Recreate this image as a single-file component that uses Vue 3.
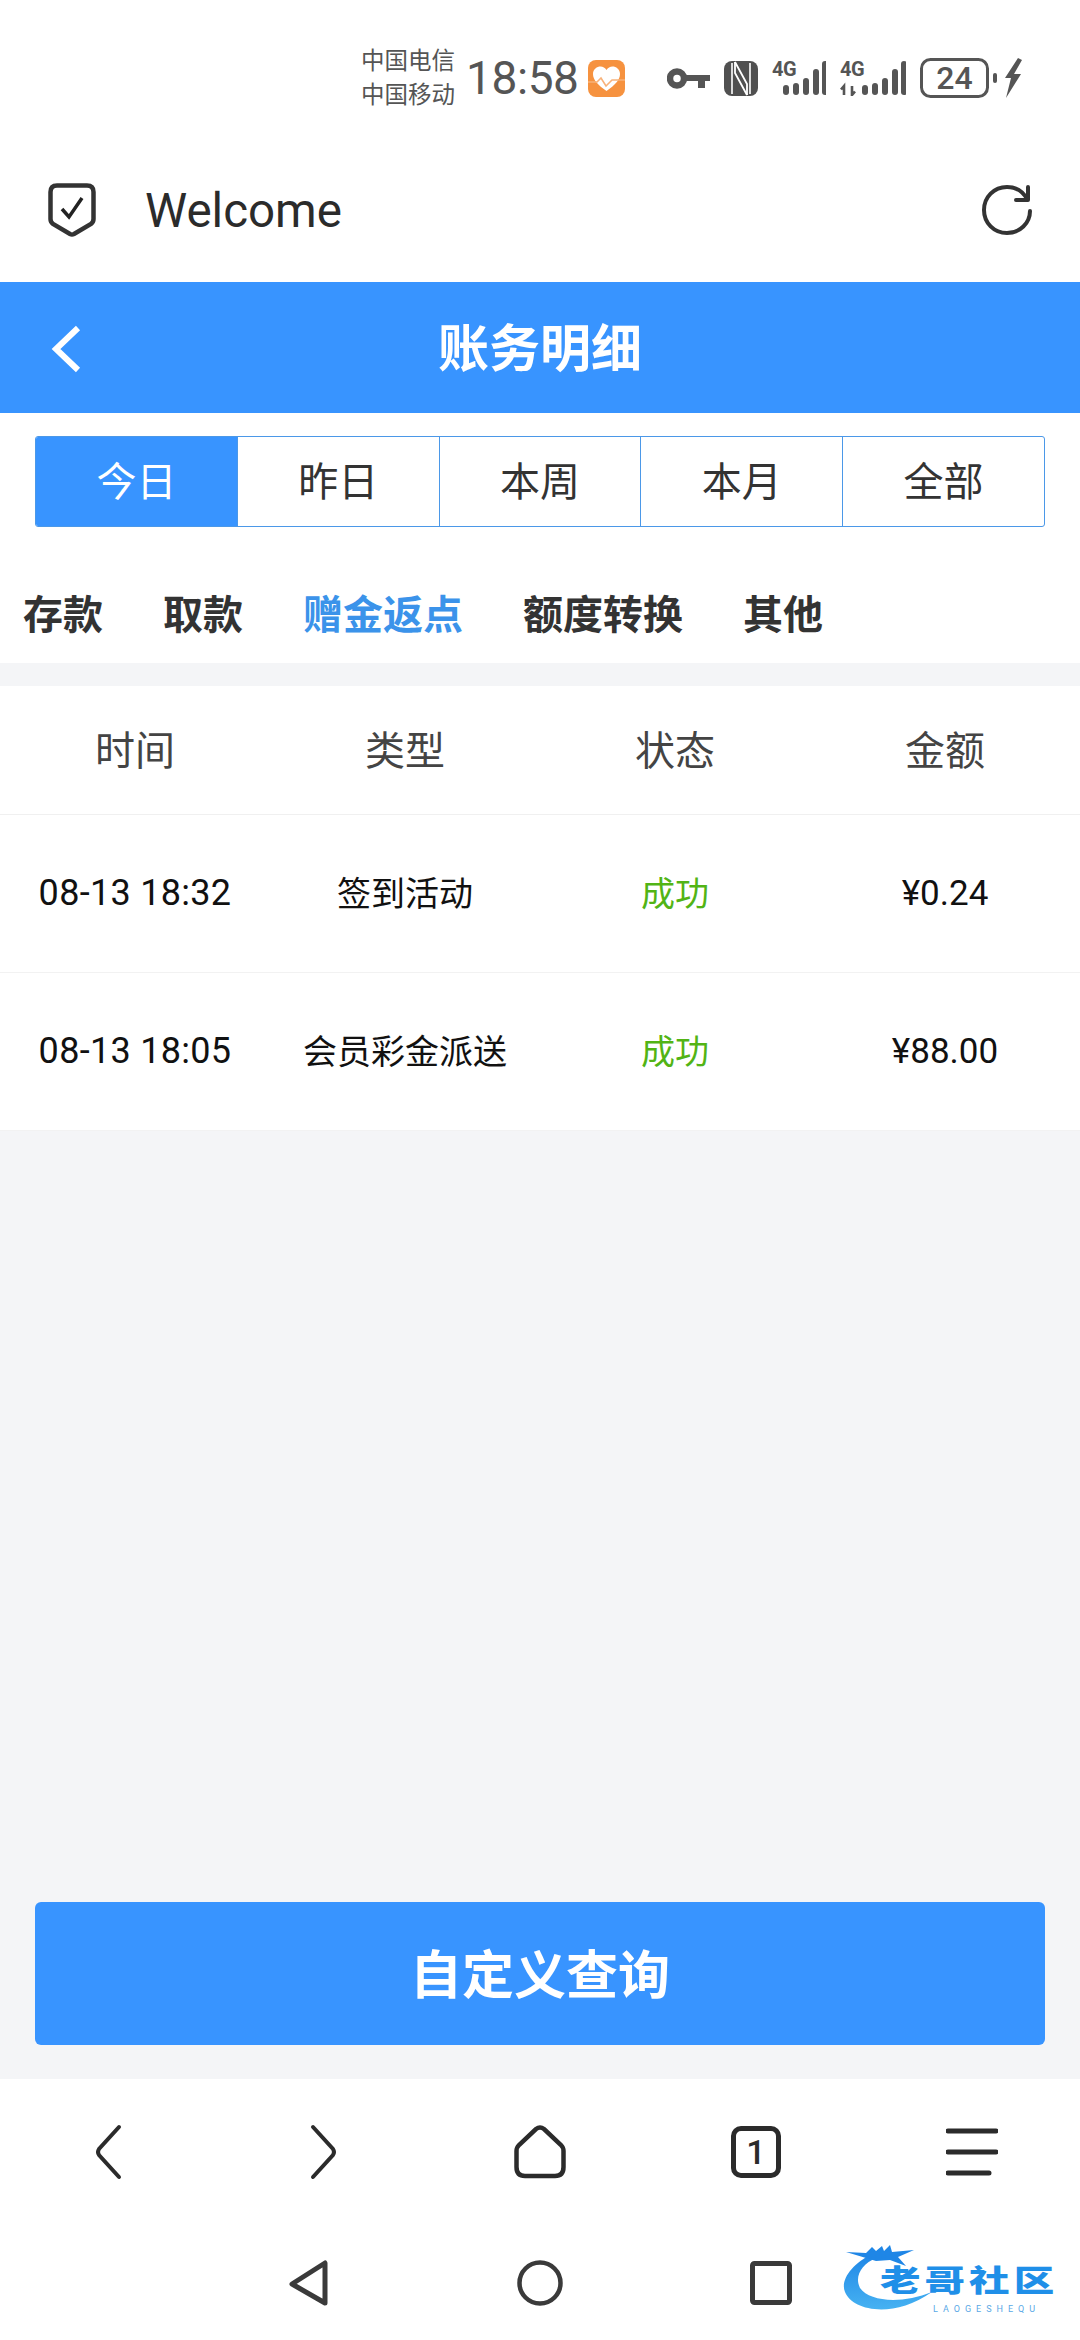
<template>
  <div class="page">
    <!-- status bar -->
    <div class="status-bar">
      <div class="carriers">
        <span>中国电信</span>
        <span>中国移动</span>
      </div>
      <span class="clock">18:58</span>
      <svg class="health" width="37" height="37" viewBox="0 0 37 37">
        <rect width="37" height="37" rx="8" fill="#f6923f" />
        <path d="M18.5 31 C10 25 5 20 5 14 C5 9 9 6.5 12.5 6.5 C15 6.5 17.2 7.8 18.5 10 C19.8 7.8 22 6.5 24.5 6.5 C28 6.5 32 9 32 14 C32 20 27 25 18.5 31 Z" fill="#fff" />
        <path d="M0 22 H9 L13 18 L18 26 L24 20 H37" fill="none" stroke="#f8b27a" stroke-width="1.6" />
      </svg>
      <svg class="key" width="43" height="21" viewBox="0 0 43 21">
        <circle cx="10" cy="10.5" r="7" fill="none" stroke="#555" stroke-width="6.5" />
        <path d="M17 7 H43 V13 H38 V20 H31 V13 H17 Z" fill="#555" />
      </svg>
      <svg class="nfc" width="34" height="35" viewBox="0 0 34 35">
        <rect width="34" height="35" rx="8" fill="#505050" />
        <path d="M8 2 V33 M26 2 V33" stroke="#fff" stroke-width="1.6" />
        <path d="M11 1 L23 23 V34" fill="none" stroke="#fff" stroke-width="1.8" />
        <path d="M11 1 V12 L23 34" fill="none" stroke="#fff" stroke-width="1.8" />
      </svg>
      <svg class="signal" width="54" height="40" viewBox="0 -4 54 40">
        <text x="0" y="16" class="net">4G</text>
        <rect v-for="b in bars" :key="b.x" :x="b.x + 9" :y="b.y" width="6" :height="35 - b.y" rx="3" fill="#555" />
      </svg>
      <svg class="signal" width="66" height="40" viewBox="0 -4 66 40">
        <text x="0" y="16" class="net">4G</text>
        <path d="M4 35 V26 L1 29.5 M12 26 V35 L15 31.5" fill="none" stroke="#555" stroke-width="2.6" />
        <rect v-for="b in bars" :key="b.x" :x="b.x + 20" :y="b.y" width="6" :height="35 - b.y" rx="3" fill="#555" />
      </svg>
      <svg class="battery" width="102" height="40" viewBox="0 0 102 40">
        <rect x="1.5" y="1.5" width="66" height="37" rx="9" fill="none" stroke="#555" stroke-width="3" />
        <text x="34.5" y="31" text-anchor="middle" class="level">24</text>
        <rect x="73" y="15" width="4" height="10" rx="2" fill="#555" />
        <path d="M98 0 L85 20 L91 20 L86 40 L101 16 L94 16 L102 2 Z" fill="#555" />
      </svg>
    </div>

    <!-- browser bar -->
    <div class="welcome-bar">
      <svg width="48" height="54" viewBox="0 0 48 54">
        <path d="M9 2.5 H39 Q45.5 2.5 45.5 9 V36 Q45.5 39 43 41 L26 51 Q24 52 22 51 L5 41 Q2.5 39 2.5 36 V9 Q2.5 2.5 9 2.5 Z" fill="none" stroke="#333" stroke-width="4.5" />
        <path d="M14 26 L21 34 L34 15" fill="none" stroke="#222" stroke-width="3.5" />
      </svg>
      <span class="welcome-text">Welcome</span>
      <svg class="reload" width="52" height="52" viewBox="0 0 52 52">
        <path d="M46 15 C41 6 33 3 26 3 C13 3 3 13 3 26 C3 39 13 49 26 49 C39 49 49 39 49 27" fill="none" stroke="#333" stroke-width="4" stroke-linecap="round" />
        <path d="M47 3 V16 H35" fill="none" stroke="#333" stroke-width="4" stroke-linecap="round" stroke-linejoin="round" />
      </svg>
    </div>

    <!-- header -->
    <div class="header">
      <svg class="back" width="32" height="48" viewBox="0 0 32 48">
        <path d="M28 3 L6 24 L28 45" fill="none" stroke="#fff" stroke-width="6" />
      </svg>
      <span class="title">账务明细</span>
    </div>

    <div class="range-wrap">
      <div class="range-tabs">
        <div v-for="(r, i) in ranges" :key="r" class="range-item" :class="{ active: i === 0 }">{{ r }}</div>
      </div>
    </div>

    <div class="type-tabs">
      <span v-for="(t, i) in types" :key="t" :class="{ on: i === 2 }">{{ t }}</span>
    </div>

    <div class="strip"></div>

    <div class="table-head">
      <div v-for="h in heads" :key="h">{{ h }}</div>
    </div>
    <div v-for="row in rows" :key="row.time" class="table-row">
      <div class="time">{{ row.time }}</div>
      <div>{{ row.type }}</div>
      <div class="ok">{{ row.status }}</div>
      <div class="amount">{{ row.amount }}</div>
    </div>

    <div class="main">
      <div class="query-btn">自定义查询</div>
    </div>

    <!-- browser toolbar -->
    <div class="browser-nav">
      <div class="nav-cell">
        <svg width="30" height="56" viewBox="0 0 30 56">
          <path d="M26 3 L6 25 Q4 28 6 31 L26 53" fill="none" stroke="#2b2b2b" stroke-width="4" stroke-linecap="round" />
        </svg>
      </div>
      <div class="nav-cell">
        <svg width="30" height="56" viewBox="0 0 30 56">
          <path d="M4 3 L24 25 Q26 28 24 31 L4 53" fill="none" stroke="#2b2b2b" stroke-width="4" stroke-linecap="round" />
        </svg>
      </div>
      <div class="nav-cell">
        <svg width="52" height="54" viewBox="0 0 52 54">
          <path d="M22 4 Q26 1 30 4 L47 20 Q49.5 22.5 49.5 26 V42 Q49.5 51 41 51 H11 Q2.5 51 2.5 42 V26 Q2.5 22.5 5 20 Z" fill="none" stroke="#2b2b2b" stroke-width="4.5" />
        </svg>
      </div>
      <div class="nav-cell">
        <div class="tab-count">1</div>
      </div>
      <div class="nav-cell">
        <svg width="52" height="48" viewBox="0 0 52 48">
          <path d="M2 3 H50 M2 24 H50 M2 45 H43" fill="none" stroke="#2b2b2b" stroke-width="5" stroke-linecap="round" />
        </svg>
      </div>
    </div>

    <!-- system nav -->
    <div class="system-nav">
      <div class="sys-cell">
        <svg width="40" height="46" viewBox="0 0 40 46">
          <path d="M36 3 V43 L3 24 Z" fill="none" stroke="#3a3a3a" stroke-width="5" stroke-linejoin="round" />
        </svg>
      </div>
      <div class="sys-cell">
        <svg width="46" height="46" viewBox="0 0 46 46">
          <circle cx="23" cy="23" r="20.5" fill="none" stroke="#3a3a3a" stroke-width="4.5" />
        </svg>
      </div>
      <div class="sys-cell">
        <svg width="42" height="44" viewBox="0 0 42 44">
          <rect x="2.5" y="2.5" width="37" height="39" rx="2" fill="none" stroke="#3a3a3a" stroke-width="5" />
        </svg>
      </div>

      <!-- watermark -->
      <div class="logo">
        <svg width="100" height="74" viewBox="0 0 100 74">
          <defs>
            <linearGradient id="logoBlue" x1="0" y1="0" x2="0" y2="1">
              <stop offset="0%" stop-color="#1f86e6" />
              <stop offset="100%" stop-color="#46b2f2" />
            </linearGradient>
          </defs>
          <path d="M30 12 C10 22 -2 38 3 50 C10 68 50 78 90 50 C60 62 28 60 18 46 C12 34 20 22 34 16 Z" fill="url(#logoBlue)" />
          <path d="M4 10 L24 11 L30 5 L34 9 L40 4 L42 9 L48 3 L50 10 L72 8 L56 15 L64 24 L48 18 L34 19 Z" fill="#1f86e6" />
        </svg>
        <span class="logo-name">老哥社区</span>
        <span class="logo-sub">LAOGESHEQU</span>
      </div>
    </div>
  </div>
</template>

<script setup>
const ranges = ['今日', '昨日', '本周', '本月', '全部']
const types = ['存款', '取款', '赠金返点', '额度转换', '其他']
const heads = ['时间', '类型', '状态', '金额']

const rows = [
  { time: '08-13 18:32', type: '签到活动', status: '成功', amount: '¥0.24' },
  { time: '08-13 18:05', type: '会员彩金派送', status: '成功', amount: '¥88.00' },
]

// signal bars, x offset + top
const bars = [
  { x: 2, y: 25 },
  { x: 12, y: 23 },
  { x: 22, y: 18 },
  { x: 32, y: 9 },
  { x: 41, y: 1 },
]
</script>

<style>
html, body { margin: 0; background: #fff; }
</style>

<style scoped>
.page { width: 1080px; height: 2340px; display: flex; flex-direction: column; background: #fff; font-family: Roboto, "Noto Sans CJK SC", sans-serif; overflow: hidden; }

.status-bar { height: 150px; flex-shrink: 0; box-sizing: border-box; padding: 6px 0 0 361px; display: flex; align-items: center; color: #555; }
.carriers { display: flex; flex-direction: column; font-size: 23.5px; line-height: 34px; width: 94px; white-space: nowrap; }
.clock { font-size: 46px; margin-left: 11px; width: 109px; letter-spacing: -0.4px; }
.health { margin-left: 13px; }
.key { margin-left: 42px; }
.nfc { margin-left: 14px; }
.signal { margin-left: 14px; margin-bottom: 4px; }
.battery { margin-left: 14px; }
.net { font-size: 20px; font-weight: 700; fill: #555; font-family: Roboto, sans-serif; letter-spacing: -0.5px; }
.level { font-size: 32px; font-weight: 500; fill: #555; font-family: Roboto, sans-serif; }

.welcome-bar { height: 132px; flex-shrink: 0; box-sizing: border-box; padding: 0 47px 12px 48px; display: flex; align-items: center; }
.welcome-text { margin-left: 49px; padding-top: 2px; font-size: 47.5px; color: #2b2b2b; }
.reload { margin-left: auto; }

.header { height: 131px; flex-shrink: 0; background: #3894ff; display: flex; align-items: center; justify-content: center; position: relative; }
.back { position: absolute; left: 50px; top: 43px; }
.title { font-size: 51px; font-weight: 700; color: #fff; padding-bottom: 5px; }

.range-wrap { padding: 23px 35px 0; flex-shrink: 0; }
.range-tabs { display: flex; height: 91px; box-sizing: border-box; border: 1px solid #4b98e8; border-radius: 3px; overflow: hidden; }
.range-item { flex: 1; display: flex; align-items: center; justify-content: center; box-sizing: border-box; padding-bottom: 5px; font-size: 40px; color: #333; border-left: 1px solid #4b98e8; }
.range-item:first-child { border-left: none; }
.range-item.active { background: #3894ff; color: #fff; }

.type-tabs { height: 136px; flex-shrink: 0; box-sizing: border-box; padding: 33px 0 0 23px; display: flex; align-items: center; gap: 60px; font-size: 40px; font-weight: 700; color: #333; }
.type-tabs .on { color: #3b93ea; }

.strip { height: 23px; flex-shrink: 0; background: #f4f5f7; }

.table-head, .table-row { display: grid; grid-template-columns: repeat(4, 1fr); flex-shrink: 0; text-align: center; align-items: center; }
.table-head { height: 129px; box-sizing: border-box; padding-bottom: 4px; border-bottom: 1px solid #f0f0f0; font-size: 40px; color: #444; }
.table-row { height: 158px; box-sizing: border-box; padding-bottom: 5px; border-bottom: 1px solid #f2f2f2; font-size: 34px; color: #111; }
.table-row:last-of-type { border-bottom: none; height: 157px; }
.time { font-size: 36px; letter-spacing: 0.3px; padding-top: 4px; }
.amount { font-size: 35px; padding-top: 4px; }
.ok { color: #52b415; }

.main { flex: 1; background: #f4f5f7; display: flex; flex-direction: column; justify-content: flex-end; padding: 0 35px 34px; }
.query-btn { height: 143px; box-sizing: border-box; padding-bottom: 5px; background: #3894ff; border-radius: 6px; color: #fff; font-size: 52px; font-weight: 700; display: flex; align-items: center; justify-content: center; }

.browser-nav { height: 146px; flex-shrink: 0; display: flex; }
.nav-cell { flex: 1; display: flex; align-items: center; justify-content: center; }
.tab-count { width: 50px; height: 52px; box-sizing: border-box; border: 5px solid #2b2b2b; border-radius: 10px; display: flex; align-items: center; justify-content: center; font-size: 34px; font-weight: 500; color: #2b2b2b; }

.system-nav { height: 115px; flex-shrink: 0; display: flex; justify-content: center; position: relative; }
.sys-cell { width: 231px; display: flex; align-items: center; justify-content: center; }

.logo { position: absolute; left: 842px; top: 17px; width: 224px; height: 74px; }
.logo-name { position: absolute; left: 38px; top: 18px; font-size: 30px; line-height: 42px; font-weight: 900; letter-spacing: 3px; white-space: nowrap; color: #1f8fe8; transform: scaleX(1.35); transform-origin: left center; }
.logo-sub { position: absolute; left: 91px; top: 62px; font-size: 9px; line-height: 10px; letter-spacing: 5px; color: #5aa9e6; white-space: nowrap; }
</style>
